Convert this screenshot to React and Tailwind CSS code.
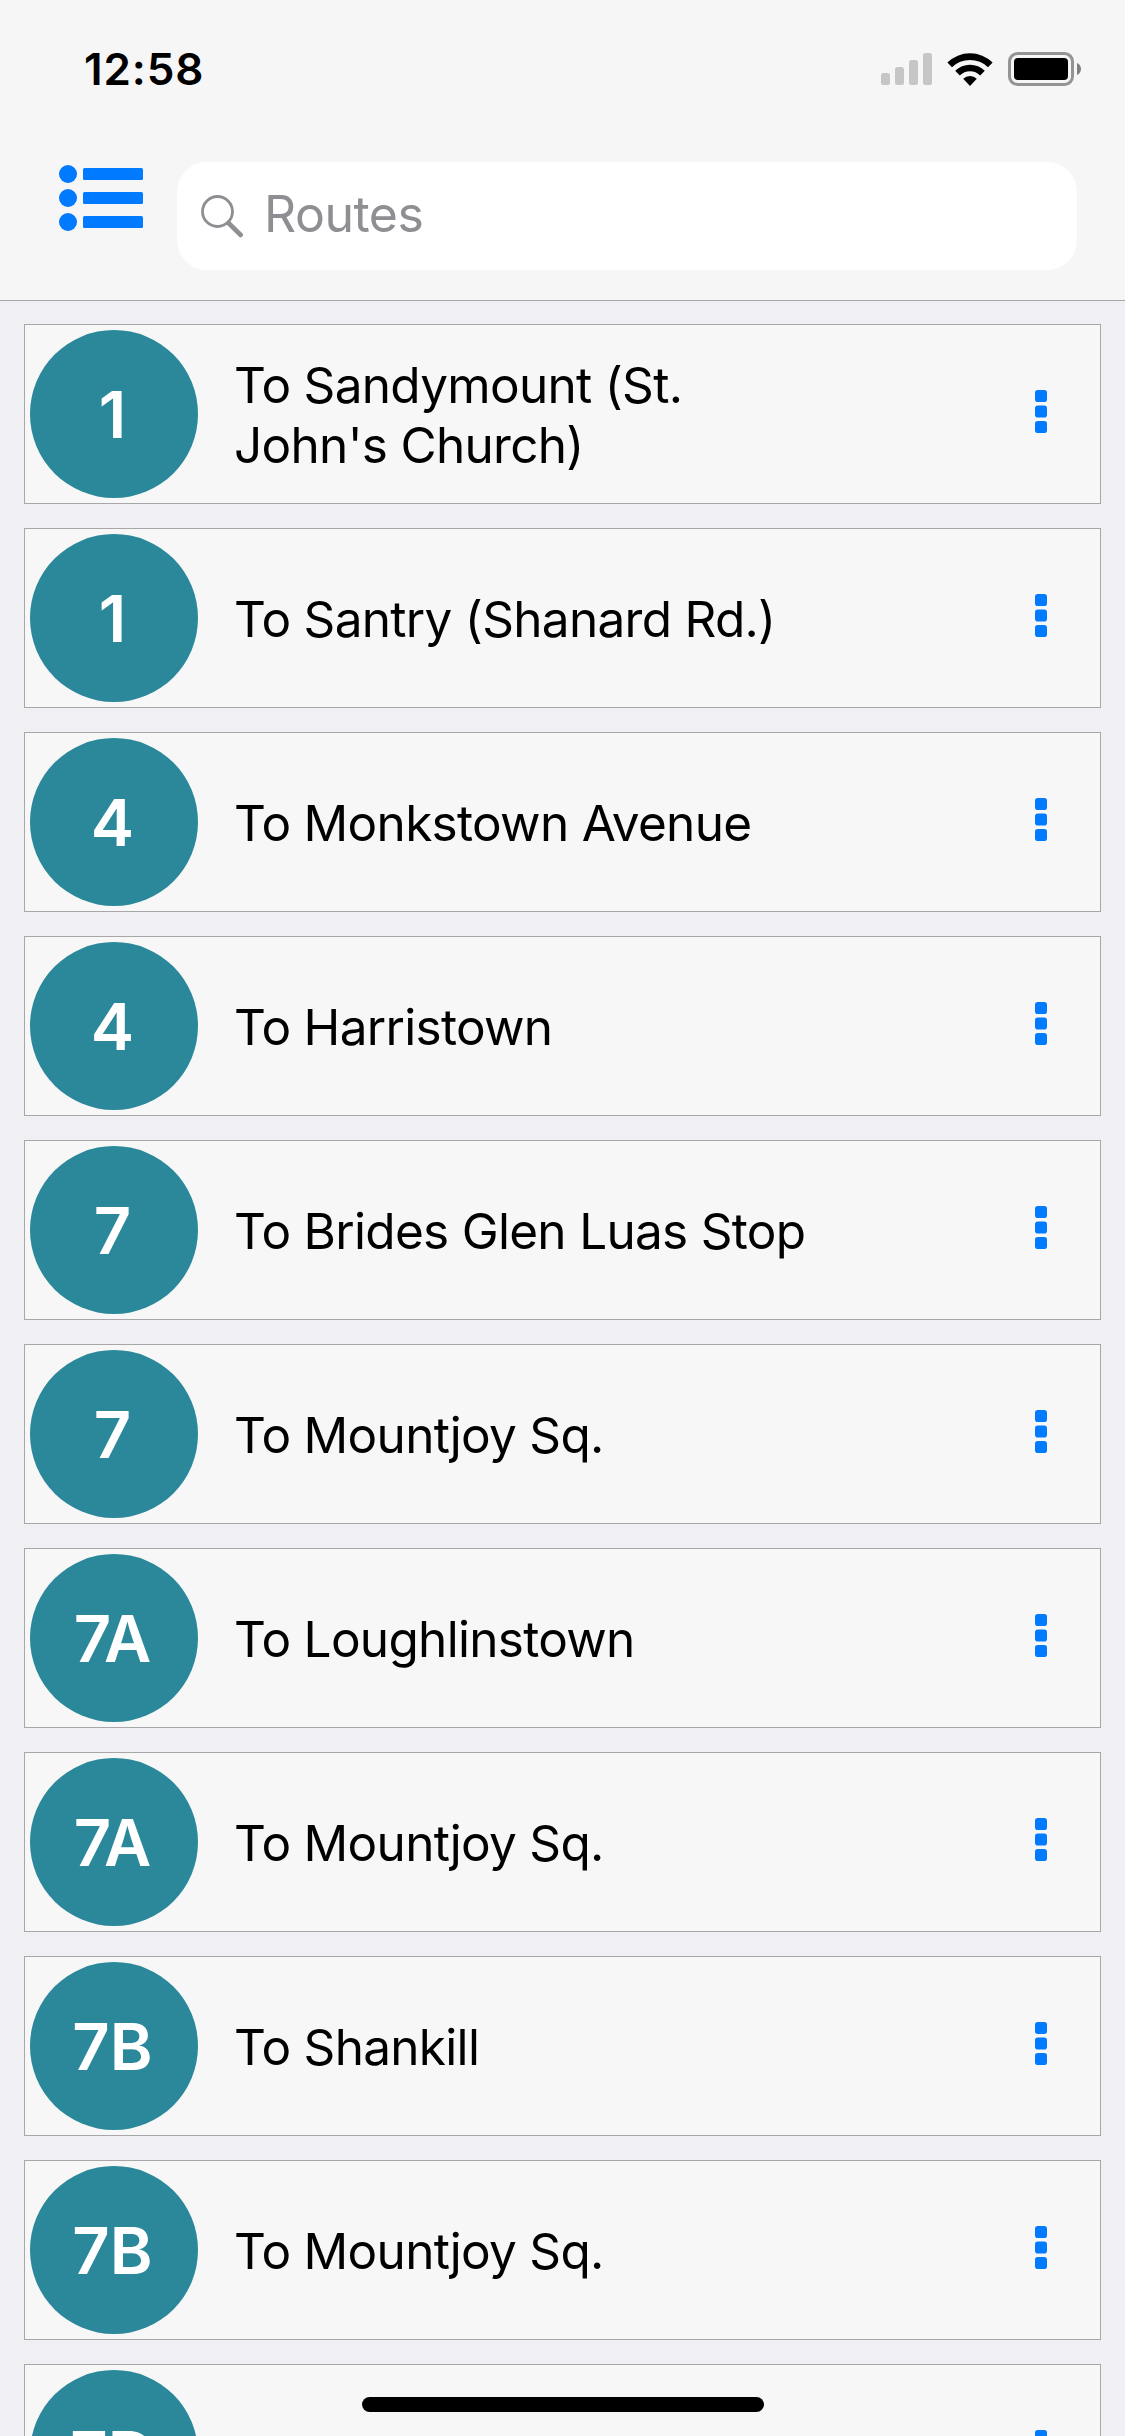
import { useState } from "react";

const ROUTES = [
  { id: 1, number: "1", destination: "To Sandymount (St. John's Church)" },
  { id: 2, number: "1", destination: "To Santry (Shanard Rd.)" },
  { id: 3, number: "4", destination: "To Monkstown Avenue" },
  { id: 4, number: "4", destination: "To Harristown" },
  { id: 5, number: "7", destination: "To Brides Glen Luas Stop" },
  { id: 6, number: "7", destination: "To Mountjoy Sq." },
  { id: 7, number: "7A", destination: "To Loughlinstown" },
  { id: 8, number: "7A", destination: "To Mountjoy Sq." },
  { id: 9, number: "7B", destination: "To Shankill" },
  { id: 10, number: "7B", destination: "To Mountjoy Sq." },
  { id: 11, number: "7D", destination: "To Dalkey" },
];

const SignalIcon = () => (
  <svg className="w-[51px] h-8" viewBox="0 0 51 32" fill="#c6c6c6">
    <rect x="0" y="20" width="9" height="12" rx="2.5" />
    <rect x="14" y="14" width="9" height="18" rx="2.5" />
    <rect x="28" y="7" width="9" height="25" rx="2.5" />
    <rect x="42" y="0" width="9" height="32" rx="2.5" />
  </svg>
);

const WifiIcon = () => (
  <svg className="w-[46px] h-[33px]" viewBox="0 0 46 33">
    <path d="M0.4 9.6 A32 32 0 0 1 45.6 9.6 L41 14.3 A25.6 25.6 0 0 0 5 14.3 Z" />
    <path d="M8.2 17.8 A21 21 0 0 1 37.8 17.8 L33.2 22.4 A14.4 14.4 0 0 0 12.8 22.4 Z" />
    <path d="M16.2 25.8 A9.6 9.6 0 0 1 29.8 25.8 L23 33 Z" />
  </svg>
);

const BatteryIcon = () => (
  <svg className="w-[73px] h-[34px]" viewBox="0 0 73 34">
    <rect x="1.5" y="1.5" width="63" height="31" rx="8" fill="none" stroke="#949494" strokeWidth="3" />
    <rect x="6" y="6" width="54" height="22" rx="4" />
    <path d="M69 11 C71.7 12.2 73 14.4 73 17 C73 19.6 71.7 21.8 69 23 Z" fill="#808080" />
  </svg>
);

const ListIcon = () => (
  <svg className="w-[84px] h-[66px]" viewBox="0 0 84 66" fill="#007aff">
    {[9, 33, 57].map((y) => (
      <g key={y}>
        <circle cx="9" cy={y} r="9" />
        <rect x="24" y={y - 6} width="60" height="12" rx="1.5" />
      </g>
    ))}
  </svg>
);

const SearchIcon = () => (
  <svg className="w-[43px] h-[43px]" viewBox="0 0 43 43" fill="none" stroke="#8e8e93">
    <circle cx="16.5" cy="16.5" r="15" strokeWidth="2.8" />
    <path d="M27.5 28 L39.7 40" strokeWidth="4.6" strokeLinecap="round" />
  </svg>
);

const MoreIcon = () => (
  <svg className="w-3 h-[43px]" viewBox="0 0 12 43" fill="#007aff">
    <rect x="0" y="0" width="12" height="12" rx="2.8" />
    <rect x="0" y="15.5" width="12" height="12" rx="2.8" />
    <rect x="0" y="31" width="12" height="12" rx="2.8" />
  </svg>
);

const StatusBar = () => (
  <div className="h-[138px] pl-[84px] pr-11 flex items-start justify-between">
    <span className="mt-[42px] text-[44px] leading-[54px] tracking-[0.9px] font-semibold text-black">12:58</span>
    <div className="flex items-center h-[34px] mt-[52px]">
      <SignalIcon />
      <div className="ml-[15px] mr-[15px]">
        <WifiIcon />
      </div>
      <BatteryIcon />
    </div>
  </div>
);

const RouteCard = ({ number, destination }) => (
  <li className="shrink-0 h-[180px] flex items-center border border-[#a7a7aa] bg-[#f7f7f7] pl-[5px] pr-[53px]">
    <div className="w-[168px] h-[168px] shrink-0 rounded-full bg-[#2a889a] flex items-center justify-center pr-[3px]">
      <span className="text-[65px] leading-none font-semibold text-white">{number}</span>
    </div>
    <p className="ml-9 w-[590px] pt-0.5 text-[49.5px] leading-[60px] tracking-[-0.7px] text-black">{destination}</p>
    <button type="button" className="ml-auto -mt-[5px]" aria-label="More">
      <MoreIcon />
    </button>
  </li>
);

export default function App() {
  const [query, setQuery] = useState("");
  const routes = ROUTES.filter((r) => r.destination.toLowerCase().includes(query.toLowerCase()));

  return (
    <div className="relative w-[1125px] h-[2436px] overflow-hidden flex flex-col bg-[#efeff4] font-['Inter',sans-serif]">
      <header className="shrink-0 h-[301px] border-b border-[#a7a7aa] bg-[#f6f6f6]">
        <StatusBar />
        <div className="flex items-start pl-[59px] pr-12 pt-6">
          <button type="button" className="mt-[3px] mr-[34px]" aria-label="Menu">
            <ListIcon />
          </button>
          <label className="flex-1 h-[108px] rounded-[30px] bg-white flex items-center pl-6">
            <SearchIcon />
            <input
              type="text"
              value={query}
              onChange={(e) => setQuery(e.target.value)}
              placeholder="Routes"
              className="ml-5 mb-[3px] flex-1 h-[60px] text-[50px] tracking-[-0.5px] text-black placeholder:text-[#8e8e93] outline-none"
            />
          </label>
        </div>
      </header>

      <ul className="flex flex-col gap-6 px-6 pt-[23px]">
        {routes.map((route) => (
          <RouteCard key={route.id} number={route.number} destination={route.destination} />
        ))}
      </ul>

      {/* Home indicator */}
      <div className="absolute bottom-6 left-[362px] w-[402px] h-[15px] rounded-full bg-black" />
    </div>
  );
}
